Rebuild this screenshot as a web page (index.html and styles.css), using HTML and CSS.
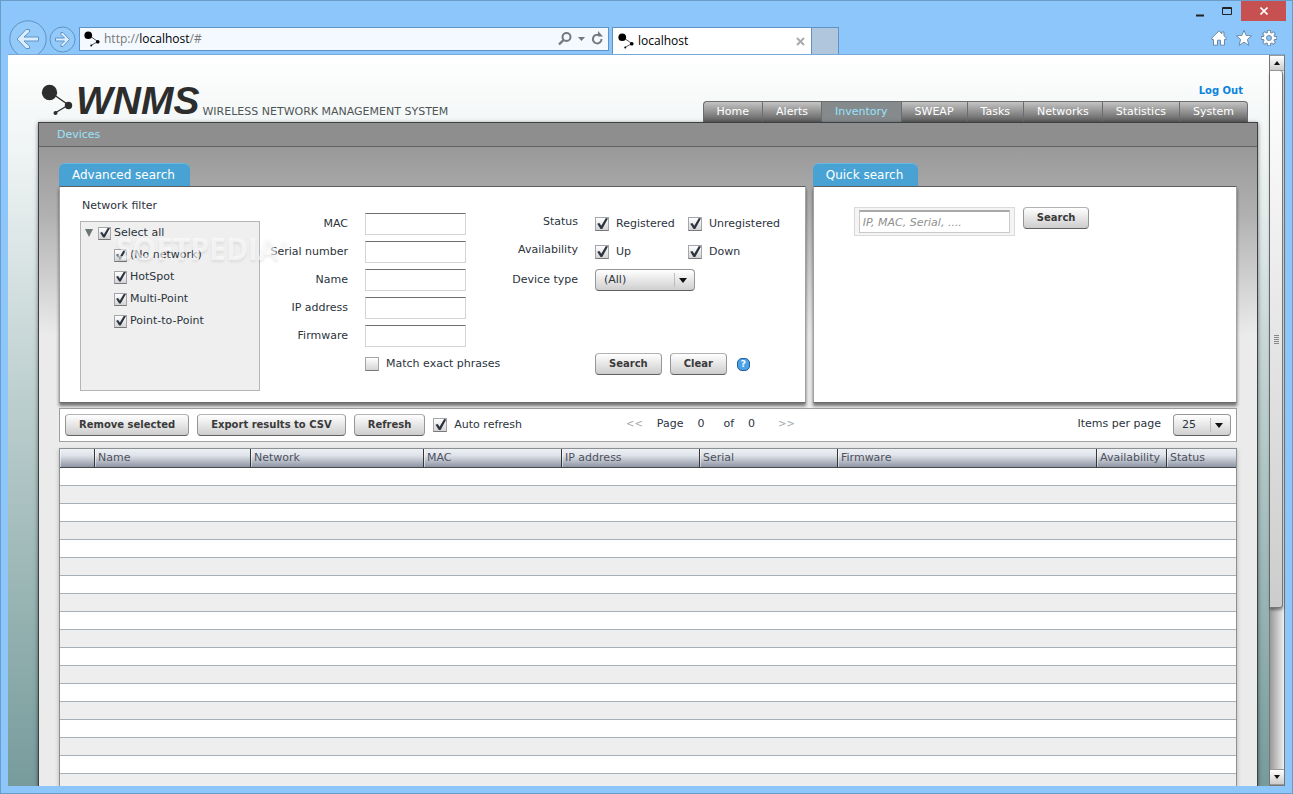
FILE: index.html
```html
<!DOCTYPE html>
<html lang="en">
<head>
    <meta charset="UTF-8">
    <meta name="viewport" content="width=device-width, initial-scale=1.0">
    <title>localhost</title>
    <link rel="stylesheet" href="styles.css">
</head>
<body>
    <svg width="0" height="0" class="defs">
        <symbol id="nodes" viewBox="0 0 32 32">
            <path d="M9 8 L27.500 21 L14 29" fill="none" stroke="currentColor" stroke-width="1.300"/>
            <circle cx="8.500" cy="8.500" r="7.700"/>
            <circle cx="27.500" cy="21.500" r="3.700"/>
            <circle cx="14.500" cy="29" r="2"/>
        </symbol>
    </svg>

    <div class="window">
        <header class="chrome">
            <div class="title-bar">
                <button class="win-btn" aria-label="Minimize"><svg width="9" height="11"><path d="M0 9.500h8" stroke="#222" stroke-width="2"/></svg></button>
                <button class="win-btn" aria-label="Maximize"><svg width="11" height="9"><path d="M.5 .5h9v7h-9zM0 1.500h10" fill="none" stroke="#222"/></svg></button>
                <button class="win-btn win-close" aria-label="Close"><svg width="8" height="8"><path d="M.5 .5l7 7m0-7l-7 7" stroke="#fff" stroke-width="1.600"/></svg></button>
            </div>
            <div class="address-row">
                <button class="nav-btn" aria-label="Back">
                    <svg width="38" height="34" viewBox="0 0 38 34">
                        <circle cx="19" cy="19" r="18.200" fill="#94cafa" stroke="#5f93c3"/>
                        <path d="M8 19 L17 9.500h3.500v2.500l-5.500 5h14.500v4h-14.500l5.500 5v2.500h-3.500z" fill="#d9edff" stroke="#5f93c3"/>
                    </svg>
                </button>
                <button class="nav-btn nav-forward" aria-label="Forward">
                    <svg width="27" height="27" viewBox="0 0 27 27">
                        <circle cx="13.500" cy="13.500" r="12.500" fill="#94cafa" stroke="#5f93c3"/>
                        <path d="M20.500 13.500l-6.500-7h-2v2l3.500 3.500h-9v3h9l-3.500 3.500v2h2z" fill="#d9edff" stroke="#5f93c3"/>
                    </svg>
                </button>
                <div class="address-bar">
                    <svg class="favicon" width="16" height="16"><use href="#nodes"/></svg>
                    <span class="url">http://<b>localhost</b>/#</span>
                    <svg class="address-icons" width="46" height="16" viewBox="0 0 46 16" fill="none" stroke="#74787d">
                        <circle cx="8.500" cy="6" r="4" stroke-width="2"/>
                        <path d="M5.500 9l-4.500 4.500" stroke-width="2.400"/>
                        <path d="M20 6h7l-3.500 4z" fill="#74787d" stroke="none"/>
                        <path d="M43.500 8a4.300 4.300 0 1 1-2.500-3.800" stroke-width="2"/>
                        <path d="M40 0v5.500h5z" fill="#74787d" stroke="none"/>
                    </svg>
                </div>
                <div class="browser-tab">
                    <svg class="favicon" width="16" height="16"><use href="#nodes"/></svg>
                    <span>localhost</span>
                    <svg class="tab-close" width="9" height="9"><path d="M1 1l7 7m0-7l-7 7" stroke="#aaa" stroke-width="2"/></svg>
                </div>
                <button class="new-tab" aria-label="New tab"></button>
                <div class="browser-tools">
                    <svg width="16" height="16" viewBox="0 0 16 16"><path d="M8 .8L.8 8v1.500h1.700v5.700h4v-5h3v5h4v-5.700h1.700V8l-2.200-2.200V2h-2.200v1.700z" fill="#fff" stroke="#6c8aa8"/></svg>
                    <svg width="16" height="16" viewBox="0 0 16 16"><path d="M8 .3l2.200 5.200 5.400.3-4.200 3.600 1.500 6L8 12.200l-4.900 3.200 1.500-6L.4 5.800l5.400-.3z" fill="#fff" stroke="#6c8aa8"/></svg>
                    <svg width="16" height="16" viewBox="0 0 16 16">
                        <g stroke="#6c8aa8" stroke-width="4"><path d="M8 0v16M0 8h16M2.300 2.300l11.400 11.400M13.700 2.300L2.300 13.700"/></g>
                        <circle cx="8" cy="8" r="5.700" fill="#fff" stroke="#6c8aa8"/>
                        <g stroke="#fff" stroke-width="2.200"><path d="M8 .8v14.400M.8 8h14.400M3 3l10 10M13 3L3 13"/></g>
                        <circle cx="8" cy="8" r="2.500" fill="#8cc6fa" stroke="#6c8aa8"/>
                    </svg>
                </div>
            </div>
        </header>

        <div class="viewport">
            <div class="page">
                <div class="masthead">
                    <div class="brand">
                        <svg class="brand-mark" width="32" height="32"><use href="#nodes"/></svg>
                        <span class="brand-name">WNMS</span>
                        <span class="brand-tagline">WIRELESS NETWORK MANAGEMENT SYSTEM</span>
                    </div>
                    <div class="masthead-right">
                        <a class="logout" href="#">Log Out</a>
                        <nav class="main-nav">
                            <a href="#">Home</a>
                            <a href="#">Alerts</a>
                            <a href="#" class="active">Inventory</a>
                            <a href="#">SWEAP</a>
                            <a href="#">Tasks</a>
                            <a href="#">Networks</a>
                            <a href="#">Statistics</a>
                            <a href="#">System</a>
                        </nav>
                    </div>
                </div>

                <main class="app">
                    <div class="sub-nav"><a href="#">Devices</a></div>

                    <div class="app-body">
                        <div class="panels">
                            <section class="panel">
                                <h2 class="panel-title">Advanced search</h2>
                                <form class="panel-body advanced">
                                    <div class="network-filter">
                                        <p>Network filter</p>
                                        <div class="tree">
                                            <div class="tree-row"><i class="tree-arrow"></i><label><input type="checkbox" checked>Select all</label></div>
                                            <div class="tree-row child"><label><input type="checkbox" checked>(No network)</label></div>
                                            <div class="tree-row child"><label><input type="checkbox" checked>HotSpot</label></div>
                                            <div class="tree-row child"><label><input type="checkbox" checked>Multi-Point</label></div>
                                            <div class="tree-row child"><label><input type="checkbox" checked>Point-to-Point</label></div>
                                        </div>
                                        <div class="watermark">SOFTPEDIA<sup>®</sup></div>
                                    </div>

                                    <div class="text-fields">
                                        <label for="mac">MAC</label><input type="text" id="mac">
                                        <label for="serial">Serial number</label><input type="text" id="serial">
                                        <label for="name">Name</label><input type="text" id="name">
                                        <label for="ip">IP address</label><input type="text" id="ip">
                                        <label for="firmware">Firmware</label><input type="text" id="firmware">
                                        <label class="check exact"><input type="checkbox">Match exact phrases</label>
                                    </div>

                                    <div class="state-fields">
                                        <span class="field-label">Status</span>
                                        <label class="check"><input type="checkbox" checked>Registered</label>
                                        <label class="check"><input type="checkbox" checked>Unregistered</label>
                                        <span class="field-label">Availability</span>
                                        <label class="check"><input type="checkbox" checked>Up</label>
                                        <label class="check"><input type="checkbox" checked>Down</label>
                                        <label class="field-label select-label" for="type">Device type</label>
                                        <span class="select type-select"><select id="type"><option>(All)</option></select></span>
                                        <div class="form-actions">
                                            <button type="button" class="btn">Search</button>
                                            <button type="button" class="btn">Clear</button>
                                            <button type="button" class="help" aria-label="Help">?</button>
                                        </div>
                                    </div>
                                </form>
                            </section>

                            <section class="panel">
                                <h2 class="panel-title">Quick search</h2>
                                <form class="panel-body quick">
                                    <div class="quick-box"><input type="text" placeholder="IP, MAC, Serial, ...." aria-label="Quick search"></div>
                                    <button type="button" class="btn">Search</button>
                                </form>
                            </section>
                        </div>

                        <div class="toolbar">
                            <button class="btn">Remove selected</button>
                            <button class="btn">Export results to CSV</button>
                            <button class="btn">Refresh</button>
                            <label class="check"><input type="checkbox" checked>Auto refresh</label>
                            <div class="pager">
                                <a class="pager-arrow" href="#">&lt;&lt;</a>
                                <span>Page</span>
                                <span>0</span>
                                <span class="pager-of">of</span>
                                <span>0</span>
                                <a class="pager-arrow" href="#">&gt;&gt;</a>
                            </div>
                            <label class="per-page" for="per-page">Items per page</label>
                            <span class="select"><select id="per-page"><option>25</option></select></span>
                        </div>

                        <table class="results">
                            <colgroup>
                                <col class="col-check"><col class="col-name"><col class="col-network"><col class="col-mid"><col class="col-mid"><col class="col-mid"><col><col class="col-end"><col class="col-end">
                            </colgroup>
                            <thead>
                                <tr><th></th><th>Name</th><th>Network</th><th>MAC</th><th>IP address</th><th>Serial</th><th>Firmware</th><th>Availability</th><th>Status</th></tr>
                            </thead>
                            <tbody>
                                <tr><td colspan="9"></td></tr>
                                <tr><td colspan="9"></td></tr>
                                <tr><td colspan="9"></td></tr>
                                <tr><td colspan="9"></td></tr>
                                <tr><td colspan="9"></td></tr>
                                <tr><td colspan="9"></td></tr>
                                <tr><td colspan="9"></td></tr>
                                <tr><td colspan="9"></td></tr>
                                <tr><td colspan="9"></td></tr>
                                <tr><td colspan="9"></td></tr>
                                <tr><td colspan="9"></td></tr>
                                <tr><td colspan="9"></td></tr>
                                <tr><td colspan="9"></td></tr>
                                <tr><td colspan="9"></td></tr>
                                <tr><td colspan="9"></td></tr>
                                <tr><td colspan="9"></td></tr>
                                <tr><td colspan="9"></td></tr>
                                <tr><td colspan="9"></td></tr>
                            </tbody>
                        </table>
                    </div>
                </main>
            </div>

            <div class="scrollbar">
                <button class="scroll-btn up" aria-label="Scroll up"></button>
                <div class="scroll-track"><div class="scroll-thumb"><i></i></div></div>
                <button class="scroll-btn down" aria-label="Scroll down"></button>
            </div>
        </div>
    </div>
</body>
</html>
```

FILE: styles.css
```css
* {
    margin: 0;
    padding: 0;
    box-sizing: border-box;
}

body {
    font-family: Verdana, 'DejaVu Sans', sans-serif;
    font-size: 11px;
    line-height: 14px;
    color: #2b333c;
    overflow: hidden;
}

a {
    text-decoration: none;
}

button {
    font: inherit;
    border: none;
    background: none;
}

svg {
    display: block;
    flex: none;
}

.defs {
    position: absolute;
}

/* browser window */

.window {
    display: flex;
    flex-direction: column;
    height: 100vh;
    padding: 0 7px 7px;
    background: #8cc6fa;
    border: 1px solid #6a9bc9;
}

.title-bar {
    display: flex;
    justify-content: flex-end;
    height: 26px;
    margin-right: -1px;
}

.win-btn {
    display: flex;
    align-items: center;
    justify-content: center;
    width: 27px;
    height: 20px;
}

.win-close {
    width: 45px;
    background: #c75050;
}

.address-row {
    display: flex;
    align-items: flex-end;
    height: 27px;
    font-family: 'Segoe UI', 'Open Sans', sans-serif;
    font-size: 12px;
    color: #000;
}

.nav-btn {
    flex: none;
    margin-left: 1px;
}

.nav-forward {
    margin-left: 2px;
    margin-bottom: 1px;
}

.address-bar {
    display: flex;
    align-items: center;
    align-self: flex-start;
    width: 530px;
    height: 24px;
    margin: 0 3px;
    padding: 0 4px;
    background: #f4f9ff;
    border: 1px solid #5f93c3;
}

.favicon {
    margin-right: 4px;
}

.url {
    color: #777;
}

.url b {
    font-weight: normal;
    color: #000;
}

.address-icons {
    margin-left: auto;
}

.browser-tab {
    display: flex;
    align-items: center;
    width: 200px;
    height: 27px;
    padding: 0 6px 0 5px;
    background: #fff;
    border: 1px solid #5f93c3;
    border-bottom: none;
}

.tab-close {
    margin-left: auto;
}

.new-tab {
    width: 27px;
    height: 27px;
    background: #afc6dc;
    border: 1px solid #5f93c3;
    border-width: 1px 1px 0 0;
}

.browser-tools {
    display: flex;
    gap: 9px;
    margin-left: auto;
    padding: 0 8px 8px 0;
}

.viewport {
    display: flex;
    flex: 1;
    min-height: 0;
    border-top: 1px solid #78a9d8;
}

/* page */

.page {
    display: flex;
    flex: 1;
    flex-direction: column;
    min-width: 0;
    padding: 0 11px 0 30px;
    background: linear-gradient(#fff 0%, #eef3f3 14%, #bccfce 47%, #779b9b 100%);
    overflow: hidden;
}

.masthead {
    display: flex;
    flex: none;
    align-items: flex-end;
    justify-content: space-between;
    height: 67px;
    padding: 0 10px 0 3px;
}

.brand {
    display: flex;
    align-items: flex-end;
    padding-bottom: 3px;
    color: #2d2d2d;
    fill: #2d2d2d;
}

.brand-mark {
    margin: 0 3px 3px 0;
}

.brand-name {
    padding-bottom: 3px;
    font: italic bold 39px/30px 'Liberation Sans', Arial, sans-serif;
}

.brand-tagline {
    margin-left: 3px;
    color: #4f5557;
}

.masthead-right {
    display: flex;
    flex-direction: column;
    align-items: flex-end;
}

.logout {
    margin: 0 5px 3px 0;
    font-size: 10px;
    font-weight: bold;
    color: #0a84dd;
}

.main-nav {
    display: flex;
    height: 21px;
}

.main-nav a {
    padding: 3px 13px;
    color: #fff;
    background: linear-gradient(#c4c4c4, #919191 50%, #5c5c5c);
    border: 1px solid #6d6d6d;
    border-width: 1px 0 0 1px;
}

.main-nav a:first-child {
    border-top-left-radius: 4px;
}

.main-nav a:last-child {
    border-right-width: 1px;
    border-top-right-radius: 4px;
}

.main-nav .active {
    color: #98e3fc;
    background: #858b8d;
}

.app {
    display: flex;
    flex: 1;
    flex-direction: column;
    min-height: 0;
    background: linear-gradient(#999 24px, #b0b0b0 90px, #ebebeb 212px);
    border: 1px solid #3e4142;
    border-bottom: none;
    box-shadow: 0 1px 4px rgba(0, 0, 0, 0.5);
}

.sub-nav {
    flex: none;
    height: 24px;
    padding: 5px 18px;
    background: #8e8e8e;
    border-bottom: 1px solid #626262;
}

.sub-nav a {
    color: #98e3fc;
}

.app-body {
    padding: 16px 20px 0;
}

.panels {
    display: grid;
    grid-template-columns: 44fr 25fr;
    gap: 7px;
}

.panel {
    display: flex;
    flex-direction: column;
}

.panel-title {
    align-self: flex-start;
    height: 23px;
    padding: 4px 15px 4px 13px;
    font-size: 12px;
    font-weight: normal;
    color: #fff;
    background: #48a3d4;
    border-top: 1px solid #68b7df;
    border-radius: 6px 6px 0 0;
}

.panel-body {
    display: flex;
    height: 217px;
    background: #fff;
    border: 1px solid #747474;
    border-color: #5f5f5f #a0a0a0 #6b6b6b;
    box-shadow: 0 3px 3px rgba(0, 0, 0, 0.5);
}

.network-filter {
    position: relative;
    width: 200px;
    padding: 12px 0 0 20px;
}

.network-filter p {
    padding-left: 2px;
}

.tree {
    height: 170px;
    margin-top: 8px;
    padding-left: 4px;
    background: #efefef;
    border: 1px solid #b5b5b5;
}

.tree-row {
    display: flex;
    align-items: center;
    height: 22px;
}

.tree-row.child {
    padding-left: 29px;
}

.tree-row label {
    display: flex;
    align-items: center;
    gap: 3px;
}

.tree-arrow {
    width: 8px;
    height: 8px;
    margin-right: 5px;
    background: #6c7673;
    clip-path: polygon(0 0, 100% 0, 50% 100%);
}

.watermark {
    position: absolute;
    top: 44px;
    left: 56px;
    font: bold 30px/36px 'Open Sans', sans-serif;
    color: rgba(255, 255, 255, 0.6);
    text-shadow: 0 2px 3px rgba(0, 0, 0, 0.08);
    pointer-events: none;
}

.watermark sup {
    font-size: 12px;
    line-height: 12px;
}

.text-fields {
    display: grid;
    grid-template-columns: 88px 101px;
    grid-auto-rows: 22px;
    align-content: start;
    align-items: center;
    gap: 6px 17px;
    padding-top: 26px;
    text-align: right;
}

.text-fields input[type="text"] {
    width: 101px;
    height: 22px;
    padding: 0 4px;
    background: #fff;
    border: 1px solid #d5d5d5;
    border-top-color: #6f6f6f;
}

.exact {
    grid-column: 2;
}

.state-fields {
    display: grid;
    grid-template-columns: 129px 93px auto;
    grid-template-rows: repeat(6, 22px);
    align-content: start;
    align-items: center;
    row-gap: 6px;
    padding-top: 26px;
}

.field-label {
    padding: 0 17px 4px 0;
    text-align: right;
}

.select-label {
    padding-bottom: 0;
}

.check {
    display: flex;
    align-items: center;
    gap: 7px;
    white-space: nowrap;
}

input[type="checkbox"] {
    appearance: none;
    flex: none;
    width: 14px;
    height: 14px;
    background: linear-gradient(#fff, #d4d4d4);
    border: 1px solid #a3a5a8;
    border-bottom-color: #77797c;
}

.tree input[type="checkbox"] {
    width: 13px;
    height: 13px;
}

input[type="checkbox"]:checked::before {
    content: '';
    display: block;
    height: 100%;
    background: #2c3440;
    clip-path: polygon(10% 48%, 28% 42%, 44% 64%, 82% 0, 100% 4%, 52% 92%, 38% 92%);
}

.select {
    position: relative;
}

.select select {
    appearance: none;
    width: 58px;
    height: 22px;
    padding: 0 8px;
    font: inherit;
    color: #2b333c;
    background: linear-gradient(#fff, #cfcfcf);
    border: 1px solid #969696;
    border-bottom-color: #606060;
    border-radius: 4px;
}

.select::before {
    content: '';
    position: absolute;
    top: 4px;
    right: 20px;
    width: 1px;
    height: 14px;
    background: #bdbdbd;
    pointer-events: none;
}

.select::after {
    content: '';
    position: absolute;
    top: 9px;
    right: 8px;
    border: solid transparent;
    border-width: 5px 4px 0;
    border-top-color: #111;
    pointer-events: none;
}

.type-select {
    width: 100px;
}

.type-select select {
    width: 100%;
}

.form-actions {
    display: flex;
    grid-row: 6;
    grid-column: 2 / 4;
    align-items: center;
    gap: 8px;
}

.btn {
    height: 22px;
    padding: 0 13px 1px;
    font-size: 10px;
    font-weight: bold;
    color: #3a3a3a;
    white-space: nowrap;
    background: linear-gradient(#fff, #cdcdcd);
    border: 1px solid #969696;
    border-top-color: #b3b3b3;
    border-bottom-color: #606060;
    border-radius: 4px;
}

.help {
    width: 13px;
    height: 13px;
    margin-left: 2px;
    font-size: 9px;
    line-height: 11px;
    font-weight: bold;
    color: #fff;
    background: #4ba1e8;
    border: 1px solid #245f9c;
    border-radius: 5px;
}

.quick {
    align-items: flex-start;
    gap: 8px;
    padding: 20px 40px;
}

.quick-box {
    padding: 2px 4px;
    background: #f4f4f4;
    border: 1px solid #dadada;
}

.quick-box input {
    display: block;
    width: 151px;
    height: 23px;
    padding: 0 3px;
    font: inherit;
    background: #fff;
    border: 1px solid #c9c9c9;
    border-top: 2px solid #a9a9a9;
}

.quick-box input::placeholder {
    font-style: italic;
    color: #8f8f8f;
}

.toolbar {
    display: flex;
    align-items: center;
    gap: 8px;
    height: 34px;
    margin-top: 5px;
    padding: 0 5px;
    background: #fff;
    border: 1px solid #a0a0a0;
}

.pager {
    display: flex;
    gap: 14px;
    margin-left: 96px;
    padding-bottom: 3px;
}

.pager-of {
    margin-left: 5px;
}

.pager-arrow {
    font-size: 10px;
    color: #a0abac;
}

.pager-arrow:last-child {
    margin-left: 9px;
}

.per-page {
    margin-left: auto;
    margin-right: 4px;
    padding-bottom: 3px;
}

.results {
    width: 100%;
    margin-top: 6px;
    table-layout: fixed;
    border-collapse: separate;
    border-spacing: 0;
    border: 1px solid #8c8f91;
    box-shadow: 0 2px 4px rgba(0, 0, 0, 0.25);
}

.col-check { width: 34px; }
.col-name { width: 156px; }
.col-network { width: 173px; }
.col-mid { width: 138px; }
.col-end { width: 70px; }

.results th {
    height: 19px;
    padding: 0 3px;
    font-weight: normal;
    text-align: left;
    white-space: nowrap;
    color: #4d5160;
    background: linear-gradient(#edf0f4, #e0e4ea 35%, #8e95a3);
    border-left: 1px solid #33373a;
    border-bottom: 1px solid #484b4e;
    box-shadow: inset 1px 0 rgba(255, 255, 255, 0.5);
}

.results th:first-child {
    border-left: none;
}

.results td {
    height: 18px;
    background: #fff;
    border-bottom: 1px solid #a6b0b9;
}

.results tr:nth-child(even) td {
    background: #eee;
}

/* scrollbar */

.scrollbar {
    display: flex;
    flex: none;
    flex-direction: column;
    width: 16px;
    background: linear-gradient(to right, #999, #eee);
    border: 1px solid #777;
    border-top: none;
}

.scroll-btn {
    display: flex;
    align-items: center;
    justify-content: center;
    height: 16px;
    background: linear-gradient(#fff, #ccc);
    border: 1px solid #999;
    border-width: 1px 0;
}

.scroll-btn::before {
    content: '';
    border: solid transparent;
    border-width: 0 3px 4px;
    border-bottom-color: #111;
}

.scroll-btn.down::before {
    border-width: 4px 3px 0;
    border-top-color: #111;
}

.scroll-track {
    flex: 1;
}

.scroll-thumb {
    display: flex;
    align-items: center;
    justify-content: center;
    width: 13px;
    height: 77%;
    background: linear-gradient(#fff, #ccc);
    border: solid #777;
    border-width: 0 1px 1px 0;
    border-radius: 0 3px 3px 0;
    box-shadow: 0 2px 3px rgba(0, 0, 0, 0.4);
}

.scroll-thumb i {
    width: 5px;
    height: 9px;
    background: repeating-linear-gradient(#888 0 1px, transparent 1px 2px);
}
```
